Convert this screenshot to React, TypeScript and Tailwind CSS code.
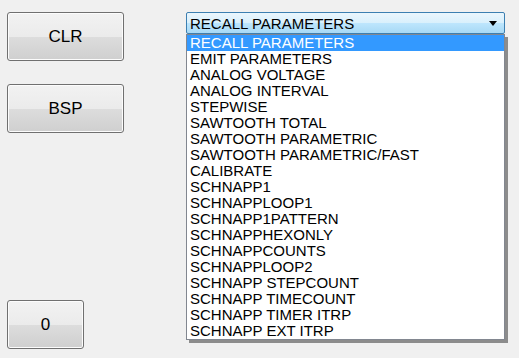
const items = [
  "RECALL PARAMETERS",
  "EMIT PARAMETERS",
  "ANALOG VOLTAGE",
  "ANALOG INTERVAL",
  "STEPWISE",
  "SAWTOOTH TOTAL",
  "SAWTOOTH PARAMETRIC",
  "SAWTOOTH PARAMETRIC/FAST",
  "CALIBRATE",
  "SCHNAPP1",
  "SCHNAPPLOOP1",
  "SCHNAPP1PATTERN",
  "SCHNAPPHEXONLY",
  "SCHNAPPCOUNTS",
  "SCHNAPPLOOP2",
  "SCHNAPP STEPCOUNT",
  "SCHNAPP TIMECOUNT",
  "SCHNAPP TIMER ITRP",
  "SCHNAPP EXT ITRP",
];

function WinButton({ label, className }: { label: string; className: string }) {
  return (
    <button
      className={`${className} flex items-center justify-center rounded-[3px] border border-[#707070] bg-[linear-gradient(#f2f2f2_0%,#ebebeb_50%,#dddddd_50%,#cfcfcf_100%)] text-[17px] text-black shadow-[inset_0_0_0_1px_#fcfcfc]`}
    >
      {label}
    </button>
  );
}

export default function App() {
  return (
    <div
      className="flex h-[358px] w-[519px] bg-[#f0f0f0] pt-3 pl-[7px]"
      style={{ fontFamily: '"Liberation Sans", Arial, sans-serif' }}
    >
      <div className="flex w-[117px] flex-col pb-[9px]">
        <WinButton label="CLR" className="h-[49px] w-[117px]" />
        <WinButton label="BSP" className="mt-[23px] h-[49px] w-[117px]" />
        <WinButton label="0" className="mt-auto h-[49px] w-[77px]" />
      </div>

      {/* combo box with its open list */}
      <div className="relative ml-[62px] h-[22px] w-[319px]">
        <div className="flex h-[22px] items-center justify-between rounded-[2px] border border-[#3c7fb1] bg-[linear-gradient(#eaf6fd_0%,#d9f0fc_50%,#bee6fd_50%,#a7d9f5_100%)] pr-[7px] pl-[3px] text-[15px] leading-none text-black">
          <span>RECALL PARAMETERS</span>
          <svg width="8" height="5" viewBox="0 0 8 5">
            <path d="M0 0h8L4 5z" fill="#000" />
          </svg>
        </div>
        <div className="absolute top-[22px] left-0 w-[319px] border border-[#828790] bg-white shadow-[3px_3px_0_#8c8c8c]">
          {items.map((it, i) => (
            <div
              key={it}
              className={`h-4 pl-[3px] text-[15px] leading-4 whitespace-nowrap ${
                i === 0 ? "bg-[#3399ff] text-white" : "text-black"
              }`}
            >
              {it}
            </div>
          ))}
        </div>
      </div>
    </div>
  );
}
